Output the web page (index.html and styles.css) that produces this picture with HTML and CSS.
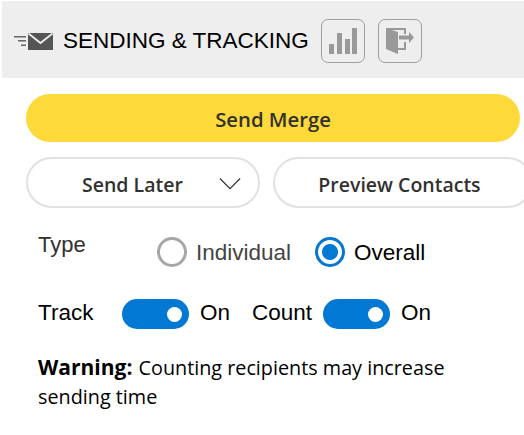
FILE: index.html
```html
<!DOCTYPE html>
<html lang="en">
<head>
    <meta charset="UTF-8">
    <meta name="viewport" content="width=device-width, initial-scale=1.0">
    <title>Sending &amp; Tracking</title>
    <link rel="stylesheet" href="styles.css">
</head>
<body>
    <header class="header">
        <svg class="mail-icon" width="39" height="17" viewBox="0 0 39 17">
            <path d="M0 3h12v1.6H0zM4 7h8v1.6H4zM7 11.500h5v1.600H7z" fill="#666"/>
            <path d="M14 0h25v17H14z" fill="#555"/>
            <path d="M14.500 0.500l12 9.500 12-9.500" fill="none" stroke="#eee" stroke-width="1.800"/>
        </svg>
        <h1 class="title">SENDING &amp; TRACKING</h1>
        <div class="icon-buttons">
            <div class="icon-button">
                <svg width="28" height="26" viewBox="0 0 28 26">
                    <path d="M0 16h5v10H0zM8 5h5v21H8zM16 11h5v15h-5zM23 0h5v26h-5z" fill="#999"/>
                </svg>
            </div>
            <div class="icon-button">
                <svg width="28" height="26" viewBox="0 0 28 26">
                    <path d="M0 0l12 4v22L0 21z" fill="#999"/>
                    <path d="M1 1h18v5M19 14v7h-7" fill="none" stroke="#999" stroke-width="2"/>
                    <path d="M13 7.500h10V4l5 5.500-5 5.500v-3.500H13z" fill="#999"/>
                </svg>
            </div>
        </div>
    </header>

    <main class="content">
        <button class="btn-primary">Send Merge</button>
        <div class="btn-row">
            <button class="btn-outline btn-later">
                <span>Send Later</span>
                <svg class="chevron" width="24" height="14" viewBox="0 0 24 14">
                    <path d="M1 1l11 11L23 1" fill="none" stroke="#333" stroke-width="1.300"/>
                </svg>
            </button>
            <button class="btn-outline btn-preview">Preview Contacts</button>
        </div>

        <div class="type-row">
            <span class="type-label">Type</span>
            <div class="radio-group">
                <span class="radio"></span>
                <span class="radio-text muted">Individual</span>
                <span class="radio checked"></span>
                <span class="radio-text">Overall</span>
            </div>
        </div>

        <div class="track-row">
            <span class="track-label">Track</span>
            <span class="toggle"></span>
            <span class="on-text">On</span>
            <span class="count-label">Count</span>
            <span class="toggle"></span>
            <span class="on-text">On</span>
        </div>

        <p class="warning"><strong>Warning:</strong> Counting recipients may increase sending time</p>
    </main>
</body>
</html>
```

FILE: styles.css
```css
* {
    box-sizing: border-box;
}

html, body {
    overflow: hidden;
}

body {
    font-family: 'Liberation Sans', Arial, sans-serif;
    background: #fff;
    color: #000;
    margin: 0;
    padding: 1px 0 0 2px;
    height: 435px;
}

.header {
    display: flex;
    align-items: center;
    height: 77px;
    background: #eee;
    padding-left: 12px;
}

.mail-icon {
    flex: none;
    margin-top: 4px;
}

.title {
    margin: 3px 0 0 10px;
    font-size: 22.5px;
    font-weight: normal;
    white-space: nowrap;
}

.icon-buttons {
    display: flex;
    gap: 13px;
    margin-left: 12px;
    margin-top: 3px;
}

.icon-button {
    width: 44px;
    height: 44px;
    display: flex;
    align-items: center;
    justify-content: center;
    border: 1.5px solid #a0a0a0;
    border-radius: 7px;
}

.content {
    padding: 16px 0 0 24px;
}

button {
    font-family: 'Open Sans', sans-serif;
    font-size: 19.5px;
    font-weight: 600;
    color: #323130;
    cursor: pointer;
}

.btn-primary {
    display: block;
    width: 494px;
    height: 48px;
    padding-top: 2px;
    font-size: 20.3px;
    background: #fdda3a;
    border: none;
    border-radius: 24px;
}

.btn-row {
    display: flex;
    gap: 13px;
    margin-top: 15px;
    width: 510px;
}

.btn-outline {
    height: 51px;
    background: #fff;
    border: 2px solid #e1e1e1;
    border-radius: 26px;
    padding: 3px 0 0;
    flex: none;
}

.btn-later {
    width: 234px;
    display: flex;
    align-items: center;
    padding-left: 54px;
}

.chevron {
    margin-left: 36px;
    margin-top: -1px;
    width: 22px;
}

.btn-preview {
    width: 260px;
    padding-right: 7px;
}

.type-row {
    display: flex;
    margin: 27px 0 0 12px;
    height: 32px;
}

.type-label {
    font-size: 22px;
    color: #323130;
    line-height: 20px;
    width: 119px;
}

.radio-group {
    display: flex;
    align-items: center;
    margin-top: 1px;
}

.radio {
    width: 30px;
    height: 30px;
    border-radius: 50%;
    border: 3px solid #a6a6a6;
    background: #fff;
}

.radio.checked {
    border-color: #0078d4;
    background: radial-gradient(circle, #0078d4 0 7.5px, #fff 8.5px);
}

.radio-text {
    font-size: 22.5px;
    margin-top: 2px;
    margin-left: 9px;
    margin-right: 24px;
}

.muted {
    color: #444;
}

.track-row {
    display: flex;
    align-items: center;
    margin: 32px 0 0 12px;
    font-size: 22.5px;
}

.track-label {
    width: 84px;
    margin-top: -2px;
}

.toggle {
    position: relative;
    width: 67px;
    height: 30px;
    border-radius: 15px;
    background: #0078d4;
}

.toggle::after {
    content: "";
    position: absolute;
    top: 8px;
    right: 7px;
    width: 15px;
    height: 15px;
    border-radius: 50%;
    background: #fff;
}

.on-text {
    margin-left: 11px;
    margin-top: -2px;
    width: 52px;
}

.count-label {
    width: 71px;
    margin-top: -2px;
}

.warning {
    margin: 24px 0 0 12px;
    width: 440px;
    font-family: 'Open Sans', sans-serif;
    font-size: 19.8px;
    line-height: 29px;
}

.warning strong {
    font-size: 21px;
    margin-right: 1px;
}
```
